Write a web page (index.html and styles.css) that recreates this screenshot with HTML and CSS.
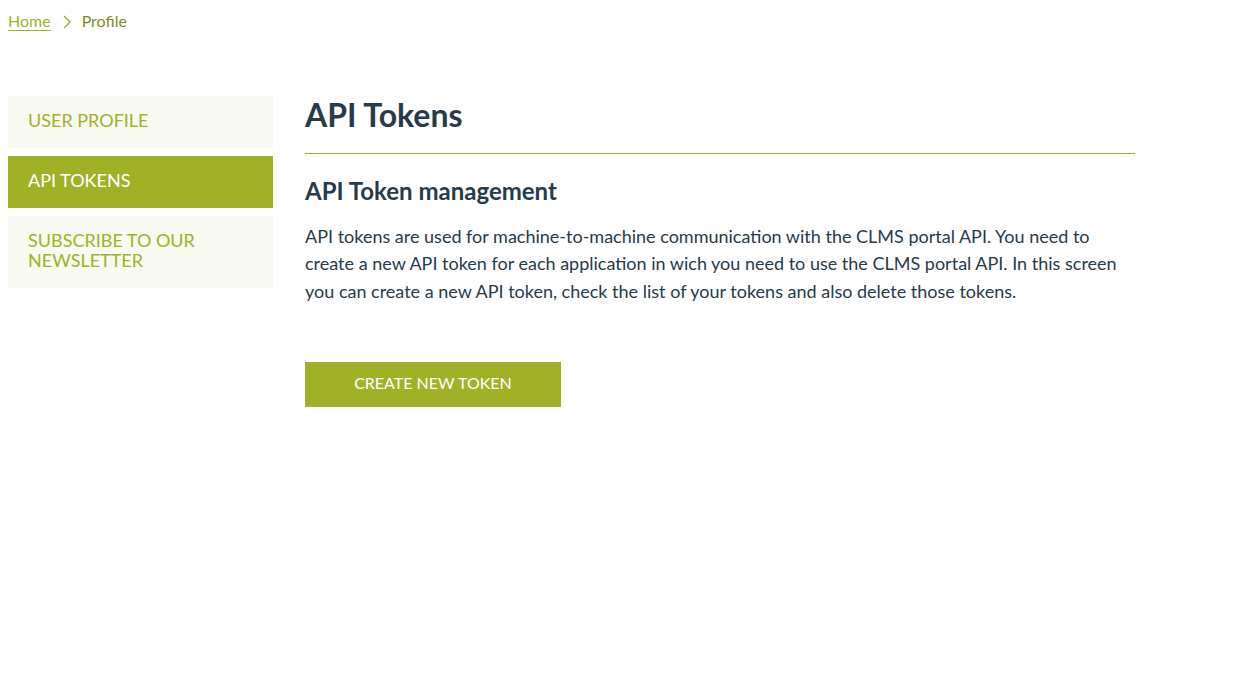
FILE: index.html
```html
<!DOCTYPE html>
<html>
<head>
<meta charset="utf-8">
<link rel="stylesheet" href="styles.css">
</head>
<body>
<nav class="breadcrumb">
  <a class="crumb-link" href="#">Home</a>
  <svg class="chev" width="10" height="16" viewBox="0 0 10 16"><path d="M2 2 L8 8 L2 14" fill="none" stroke="#a0b128" stroke-width="1.4"/></svg>
  <span class="crumb-current">Profile</span>
</nav>
<div class="layout">
  <aside class="sidebar">
    <a class="side-item" href="#">USER PROFILE</a>
    <a class="side-item active" href="#">API TOKENS</a>
    <a class="side-item" href="#">SUBSCRIBE TO OUR NEWSLETTER</a>
  </aside>
  <main class="main">
    <h1 class="title">API Tokens</h1>
    <hr class="rule">
    <h2 class="subtitle">API Token management</h2>
    <p class="desc">API tokens are used for machine-to-machine communication with the CLMS portal API. You need to create a new API token for each application in wich you need to use the CLMS portal API. In this screen you can create a new API token, check the list of your tokens and also delete those tokens.</p>
    <button class="btn">CREATE NEW TOKEN</button>
  </main>
</div>
</body>
</html>
```
FILE: styles.css
```css
body {
  margin: 0;
  padding: 0 8px;
  font-family: Lato, "Open Sans", sans-serif;
  background: #fff;
  color: #273b4b;
}
.breadcrumb {
  display: flex;
  align-items: center;
  height: 42px;
  font-size: 16px;
}
.crumb-link {
  color: #a0b128;
  text-decoration: none;
  border-bottom: 1px solid #a0b128;
  line-height: 19px;
  margin-top: 0;
}
.chev {
  margin: 1px 10px 0 11px;
}
.crumb-current {
  color: #7f8c1c;
  margin-top: -1px;
}
.layout {
  display: flex;
  gap: 32px;
  margin-top: 54px;
}
.sidebar {
  width: 265px;
  flex: none;
  display: flex;
  flex-direction: column;
  gap: 8px;
}
.side-item {
  display: block;
  background: #f8f9f0;
  color: #a0b128;
  text-decoration: none;
  font-size: 18px;
  line-height: 20px;
  padding: 14px 20px 18px;
}
.side-item.active {
  background: #a0b128;
  color: #fff;
}
.main {
  width: 830px;
}
.title {
  font-size: 32px;
  font-weight: 700;
  margin: 0;
  line-height: 38px;
}
.rule {
  border: 0;
  border-top: 1px solid #a0b128;
  margin: 19px 0 0;
}
.subtitle {
  font-size: 24px;
  font-weight: 700;
  margin: 22px 0 0;
  line-height: 30px;
}
.desc {
  font-size: 18px;
  line-height: 27.3px;
  margin: 17px 0 0;
}
.btn {
  display: block;
  margin-top: 57px;
  width: 256px;
  height: 45px;
  padding: 0 0 3px;
  background: #a0b128;
  color: #fff;
  border: 0;
  font-family: Lato, sans-serif;
  font-size: 16px;
  cursor: pointer;
}
```
